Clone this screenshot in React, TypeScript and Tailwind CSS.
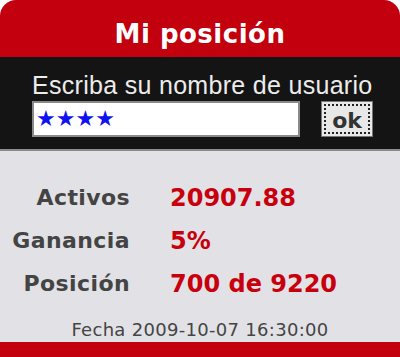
import React from "react";

export default function App() {
  const rows = [
    { label: "Activos", value: "20907.88" },
    { label: "Ganancia", value: "5%" },
    { label: "Posición", value: "700 de 9220" },
  ];
  return (
    <div
      className="w-[400px] h-[357px] bg-white flex flex-col overflow-hidden"
      style={{ fontFamily: '"DejaVu Sans", "Liberation Sans", sans-serif' }}
    >
      <div className="h-[57px] shrink-0 bg-[#c2000e] rounded-t-[16px] flex items-center justify-center pt-[10px]">
        <span className="text-white font-bold text-[26px] leading-none tracking-[0.5px]">
          Mi posición
        </span>
      </div>
      <div className="h-[92px] shrink-0 bg-[#141414] flex flex-col pl-[32px] pt-[15px]">
        <div
          className="text-[#ececec] text-[25px] leading-[26px] tracking-[0.3px] whitespace-nowrap"
          style={{ fontFamily: '"Liberation Sans", sans-serif' }}
        >
          Escriba su nombre de usuario
        </div>
        <div className="flex items-center mt-[3px] gap-[21px]">
          <div className="w-[268px] h-[36px] bg-white border-2 border-[#8a8a8a] flex items-center pl-[2px]">
            <span className="text-[#1010f0] text-[22px] leading-none tracking-[0px]">★★★★</span>
          </div>
          <div className="w-[52px] h-[36px] bg-[#e8e8e8] border border-[#777] p-[2px]">
            <div className="w-full h-full border-2 border-dotted border-[#222] flex items-end justify-center">
              <span className="text-[#333] font-bold text-[22px] leading-[22px]">ok</span>
            </div>
          </div>
        </div>
      </div>
      <div className="h-[2px] shrink-0 bg-[#8c8c8c]" />
      <div className="flex-1 bg-[#e2e2e6] flex flex-col pt-[33px]">
        <div className="flex flex-col gap-[15px]">
          {rows.map((r) => (
            <div key={r.label} className="flex items-center h-[28px]">
              <div className="w-[130px] text-right text-[#444] font-bold text-[22px] leading-none tracking-[0.4px]">
                {r.label}
              </div>
              <div className="pl-[40px] text-[#c8000e] font-bold text-[24px] leading-none">
                {r.value}
              </div>
            </div>
          ))}
        </div>
        <div className="mt-auto mb-[3px] text-center text-[#444] text-[18px] leading-none tracking-[0.3px]">
          Fecha 2009-10-07 16:30:00
        </div>
      </div>
      <div className="h-[15px] shrink-0 bg-[#c2000e]" />
    </div>
  );
}
